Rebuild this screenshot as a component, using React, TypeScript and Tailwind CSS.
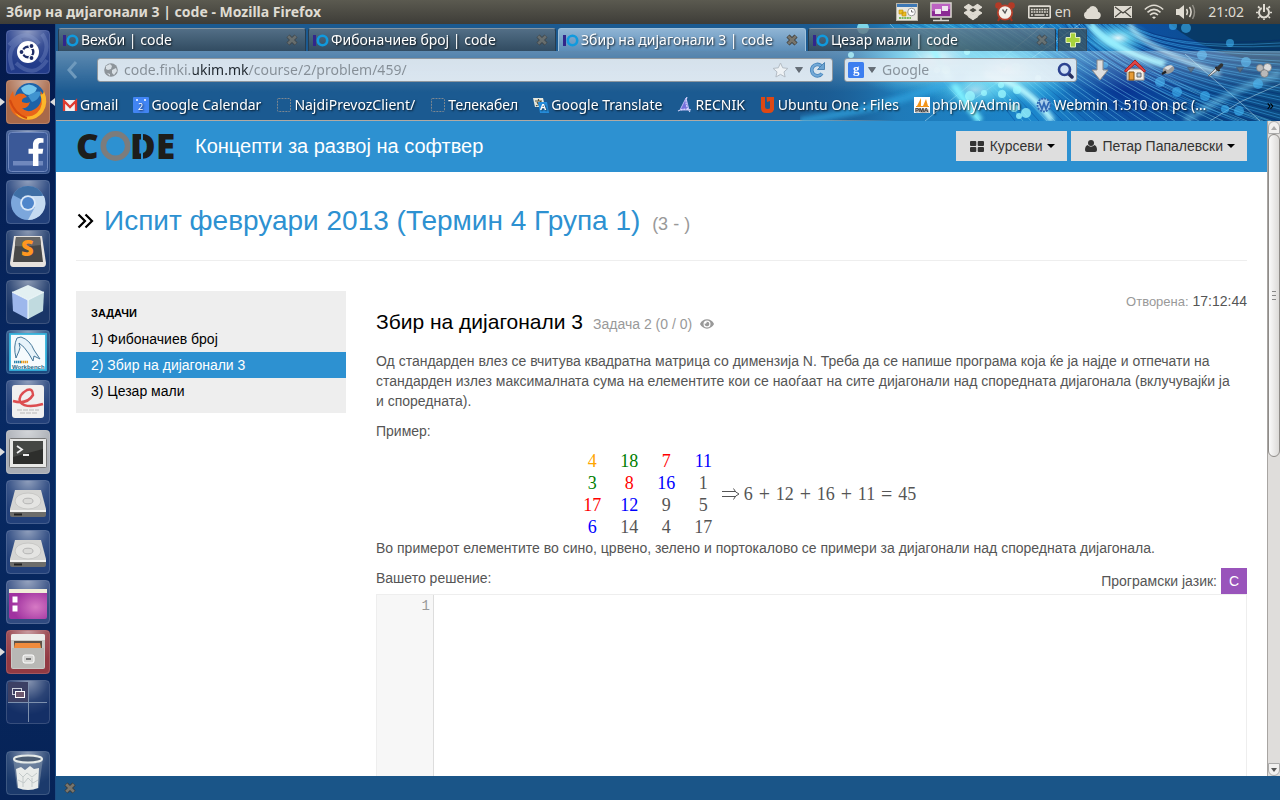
import React from "react";
import { FaDropbox, FaEye, FaFacebookF } from "react-icons/fa";

const ui = "font-['Noto_Sans','Open_Sans',sans-serif]";
const glow = "[text-shadow:1px_1px_2px_#000c]";

/* ---------- system panel ---------- */

function Panel() {
  return (
    <header
      className={`flex h-6 shrink-0 items-center justify-between bg-linear-to-b from-[#5b5a50] to-[#3e3d38] pr-2 pl-1.5 text-sm text-[#dfdbd2] ${ui}`}
    >
      <h1 className="text-sm font-bold">Збир на дијагонали 3 | code - Mozilla Firefox</h1>
      <div className="flex items-center gap-3">
        <svg width="22" height="20" viewBox="0 0 22 20">
          <rect x="0.5" y="1.500" width="21" height="17" fill="#e9e7df" stroke="#b9b5aa" />
          <rect x="1" y="2" width="20" height="3" fill="#3d78b5" />
          <path d="M3 8h4v4H3zM6 10h4v4H6z" fill="#edbd22" stroke="#b88a0a" strokeWidth=".6" />
          <circle cx="15.500" cy="10" r="3.800" fill="#fff" stroke="#999" />
          <path d="M15.500 8v2h2" stroke="#555" fill="none" strokeWidth=".8" />
          <path d="M3 16h12" stroke="#56a838" strokeWidth="1.500" strokeDasharray="2 .6" />
        </svg>
        <svg width="22" height="20" viewBox="0 0 22 20">
          <rect x="1" y="1" width="20" height="14" fill="#8b2a94" stroke="#d8d4ce" strokeWidth="1.600" />
          <path d="M2 2h18v5Q10 10 2 9z" fill="#bd62c2" />
          <rect x="5" y="7" width="6" height="5" fill="#f0e6f0" />
          <rect x="12" y="4" width="6" height="5" fill="#f0e6f0" />
          <path d="M11 16v2M3 18.500h16" stroke="#d8d4ce" strokeWidth="1.500" />
        </svg>
        <span className="flex [&_path]:stroke-[#dfdbd2] [&_path]:[stroke-width:30px]">
          <FaDropbox size={18} />
        </span>
        <svg width="22" height="20" viewBox="0 0 20 20">
          <path d="M5 15l-2 4M15 15l2 4" stroke="#a03020" strokeWidth="2" />
          <circle cx="3.500" cy="3.500" r="3.300" fill="#b33a26" />
          <circle cx="16.500" cy="3.500" r="3.300" fill="#b33a26" />
          <circle cx="10" cy="10.500" r="7.200" fill="#f3efe8" stroke="#b5402c" strokeWidth="1.800" />
          <path d="M7.500 7.500l2.500 3.500 2-4" stroke="#555" strokeWidth="1.300" fill="none" />
        </svg>
        <div className="flex items-center gap-1">
          <svg width="23" height="14" viewBox="0 0 23 14">
            <rect x=".7" y="1.200" width="21.600" height="11.600" rx="1" fill="none" stroke="#dfdbd2" strokeWidth="1.800" />
            <path d="M3 4.500h17M3 7h17" stroke="#dfdbd2" strokeWidth="1.700" strokeDasharray="1.800 .8" />
            <path d="M3 10h2M6.500 10h10M18 10h2" stroke="#dfdbd2" strokeWidth="1.700" />
          </svg>
          <span>en</span>
        </div>
        <svg width="19" height="14" viewBox="0 0 19 14" fill="#dfdbd2">
          <path d="M4 14a4 4 0 0 1-.8-7.500A4 4 0 0 1 6 3.200 4.500 4.500 0 0 1 14 3.500c.8 1 1 2 1 3.200A3.800 3.800 0 0 1 15 14z" />
        </svg>
        <svg width="18" height="12" viewBox="0 0 18 12">
          <rect width="18" height="12" fill="#dfdbd2" />
          <path d="M1 1l8 6 8-6M1 11l6-5M17 11l-6-5" stroke="#48463f" strokeWidth="1.100" fill="none" />
        </svg>
        <svg width="20" height="16" viewBox="0 0 20 16" fill="none" stroke="#dfdbd2" strokeWidth="1.600">
          <path d="M.8 5.500Q10-3 19.200 5.500M3.500 8.300q6.500-6 13 0M6 11q4-3.600 8 0" />
          <path d="M8 13.200q2-1.500 4 0L10 15z" fill="#dfdbd2" stroke="none" />
        </svg>
        <svg width="20" height="16" viewBox="0 0 20 16" fill="none" stroke="#dfdbd2" strokeWidth="1.500">
          <path d="M0 5h3l5-4v14l-5-4H0z" fill="#dfdbd2" stroke="none" />
          <path d="M10.500 5q2 3 0 6M13.500 3q3.200 5 0 10" />
          <path d="M16.500 1q4 7 0 14" opacity=".45" />
        </svg>
        <time>21:02</time>
        <svg width="16" height="16" viewBox="0 0 16 16" fill="none" stroke="#dfdbd2">
          <path d="M5.700 4A5 5 0 1 0 10.300 4" strokeWidth="2" />
          <path d="M8 0v8" strokeWidth="2" />
          <path d="M0 8.500h2M14 8.500h2M2 14l1.600-1.500M14 14l-1.600-1.500M8 14.500V16M2 2.500L3.700 4M14 2.500L12.300 4" strokeWidth="1.700" />
        </svg>
      </div>
    </header>
  );
}

/* ---------- launcher ---------- */

type Tile = { name: string; bg: string; running?: boolean; active?: boolean; art: React.ReactNode };

const disk = (
  <g>
    <path d="M9 10h26l5 19v6H4v-6z" fill="#d5d5d3" />
    <path d="M4 30h36v5q0 2-2 2H6q-2 0-2-2z" fill="#6c6c6a" />
    <path d="M4 30h36v2H4z" fill="#f3f3f1" />
    <ellipse cx="22" cy="21" rx="13" ry="8" fill="#e4e4e2" stroke="#c8c8c6" />
    <ellipse cx="22" cy="21" rx="5" ry="2.800" fill="#dadad8" stroke="#b5b5b5" />
    <path d="M8 34.500h8" stroke="#222" strokeWidth="2" />
  </g>
);

const tiles: Tile[] = [
  {
    name: "Dash",
    bg: "bg-[#233c8a]",
    art: (
      <g fill="none">
        <path d="M3 15Q20-4 33 14M41 30Q28 50 10 33M7 40Q-2 18 16 10M36 4q10 14-2 28" stroke="#8fa3d5" strokeWidth="4" opacity=".3" />
        <circle cx="22" cy="22" r="11" fill="#fff" />
        <circle cx="22" cy="22" r="5.300" stroke="#1d2c66" strokeWidth="2.400" />
        <g fill="#1d2c66" stroke="#fff" strokeWidth="1.200">
          <circle cx="15.500" cy="22" r="2.500" />
          <circle cx="25.500" cy="16" r="2.500" />
          <circle cx="25.500" cy="28" r="2.500" />
        </g>
      </g>
    ),
  },
  {
    name: "Firefox",
    bg: "bg-[#a8694a]",
    running: true,
    active: true,
    art: (
      <g>
        <circle cx="24" cy="18" r="15" fill="#1d62a8" />
        <path d="M15 8q8-7 16 0-2 7-8 7t-8-7z" fill="#75c6ec" />
        <path d="M22 16q8-6 13-4-2 8-9 10z" fill="#3f93cf" />
        <path d="M38 11q5 12-1 21-8 10-20 7Q3 35 3 20q1-5 4-9l1 6q4-5 10-3l3 3q-6 1-5 5 5 2 8 0-2 7-8 6 5 6 13 1 9-6 5-18 4 3 3 6z" fill="#e8641a" />
        <path d="M38 11q5 12-1 21-8 10-20 7-5-2-8-6 13 7 22 0 8-8 3-19 3 2 4-3z" fill="#fbb72b" />
        <path d="M4 20q5 15 17 18" stroke="#d44a10" strokeWidth="2" fill="none" />
      </g>
    ),
  },
  {
    name: "Facebook",
    bg: "bg-[#2b4a86]",
    art: (
      <g>
        <rect x="2.500" y="2.500" width="39" height="39" rx="3" fill="#3b5998" stroke="#6f88be" />
        <rect x="7" y="31" width="30" height="4.500" fill="#7088bd" />
        <FaFacebookF x={16} y={8} size={28} color="#fff" />
      </g>
    ),
  },
  {
    name: "Chromium",
    bg: "bg-[#22407a]",
    art: (
      <g>
        <circle cx="22" cy="23" r="17" fill="#7ca7dc" />
        <path d="M22 23L7 15a17 17 0 0 1 30 0z" fill="#3f6fa5" />
        <path d="M22 16h16a17 17 0 0 1-16 24l7-13z" fill="#c5dbf1" />
        <circle cx="22" cy="23" r="7.800" fill="#dbe9f8" />
        <circle cx="22" cy="23" r="6" fill="#4f86cb" />
      </g>
    ),
  },
  {
    name: "Sublime Text",
    bg: "bg-[#1a3668]",
    art: (
      <g>
        <path d="M8 6h28l4 27q0 4-3 4H7q-3 0-3-4z" fill="#e6e2de" />
        <path d="M10 7h24l3 25H7z" fill="#484848" />
        <path d="M10 7h24l1 8Q20 17 9 16z" fill="#666" />
        <text x="15" y="26" fontSize="22" fontWeight="900" fill="#ff9720" fontFamily="Noto Sans">S</text>
      </g>
    ),
  },
  {
    name: "NetBeans",
    bg: "bg-[#1a3668]",
    art: (
      <g>
        <path d="M22 5l16 7-16 8-16-8z" fill="#e3f0f2" />
        <path d="M6 12l16 8v19L7 31z" fill="#9db7ec" />
        <path d="M38 12l-16 8v19l15-8z" fill="#c0dadf" />
        <path d="M6 12l16 8 16-8M22 20v19" stroke="#f7ffff" fill="none" />
      </g>
    ),
  },
  {
    name: "MySQL Workbench",
    bg: "bg-[#1d4a80]",
    art: (
      <g>
        <rect x="4" y="4" width="36" height="36" fill="#f6fbfd" stroke="#35b3dc" strokeWidth="1.800" />
        <path d="M10 28Q7 16 11 8l4-1q9 3 13 13l6 9-6-3-1 5-4-7q-5-8-10-11 2 5 0 8z" fill="#e7f3fa" stroke="#46789a" />
        <path d="M8 32h7" stroke="#2b85ad" strokeWidth="2.500" strokeDasharray="1.500 .5" />
        <path d="M15 32h7" stroke="#e79a21" strokeWidth="2.500" strokeDasharray="1.500 .5" />
        <text x="6" y="38.500" fontSize="6" fontWeight="700" fill="#296987" fontFamily="Liberation Sans">Workbench</text>
      </g>
    ),
  },
  {
    name: "Document Viewer",
    bg: "bg-[#22407a]",
    art: (
      <g>
        <rect x="6" y="5" width="32" height="33" rx="3" fill="#f0efef" />
        <path d="M7 21q14 4 20-6 0-7-6-5-9 5-7 12 6 7 23 2" fill="none" stroke="#dc4d50" strokeWidth="2.500" />
        <path d="M11 30h22M14 33h17" stroke="#ccc" strokeWidth="1.500" strokeDasharray="5 1" />
      </g>
    ),
  },
  {
    name: "Terminal",
    bg: "bg-[#a9adb4]",
    running: true,
    art: (
      <g>
        <rect x="3.500" y="8.500" width="37" height="29" rx="1" fill="#e8e8e6" stroke="#777" />
        <rect x="7" y="11" width="30" height="23" fill="#2d2e2c" />
        <path d="M7 11h30v8L7 27z" fill="#454744" />
        <path d="M11 16l5 3.500-5 3.500M17 25h6" fill="none" stroke="#eee" strokeWidth="1.800" />
      </g>
    ),
  },
  { name: "Disk 1", bg: "bg-[#22407a]", art: disk },
  { name: "Disk 2", bg: "bg-[#22407a]", art: disk },
  {
    name: "Desktop",
    bg: "bg-[#304a80]",
    art: (
      <g>
        <defs>
          <radialGradient id="purple" cx=".7" cy=".6" r=".6">
            <stop offset="0" stopColor="#d67ac4" />
            <stop offset="1" stopColor="#a032a0" />
          </radialGradient>
        </defs>
        <rect x="3" y="9" width="38" height="30" rx="2" fill="url(#purple)" />
        <path d="M3 9h38v4H3z" fill="#f0edd9" />
        <path d="M6.500 16.500h5v6h-5zM6.500 25.500h5v6h-5z" fill="#fff" />
      </g>
    ),
  },
  {
    name: "Files",
    bg: "bg-[#923a43]",
    running: true,
    art: (
      <g>
        <rect x="5" y="4" width="34" height="35" rx="2" fill="#c9c9c6" />
        <path d="M5 10V6q0-2 2-2h30q2 0 2 2v4z" fill="#ededeb" />
        <rect x="8" y="11" width="28" height="8" fill="#5d5148" />
        <path d="M9 13h25l1 5H8z" fill="#f08b3d" />
        <rect x="6" y="18" width="32" height="20" fill="#b8b8b5" />
        <rect x="17" y="25" width="11" height="8" rx="2" fill="#d4d4d2" stroke="#fff" />
        <rect x="20" y="28" width="5" height="2" fill="#777" />
      </g>
    ),
  },
  {
    name: "Workspaces",
    bg: "bg-[#142f66]",
    art: (
      <g>
        <path d="M2 2h20v20H2z" fill="#3c4064" />
        <path d="M22.500 3v39M2 22.500h39" stroke="#7d90ae" />
        <rect x="6.500" y="8.500" width="9" height="6" fill="none" stroke="#cbd0db" />
        <rect x="9.500" y="11.500" width="9" height="6" fill="#6e596e" stroke="#fff" />
      </g>
    ),
  },
  {
    name: "Trash",
    bg: "bg-[#1b3a6c]",
    art: (
      <g>
        <path d="M7 7h30l-4 30q-11 4-22 0z" fill="#8193a8" opacity=".6" />
        <ellipse cx="22" cy="8" rx="14" ry="3.500" fill="#4b5c72" stroke="#e6ebe9" strokeWidth="2" />
        <path d="M10 18l5-2 4 3 5-4 4 3 5-1-1 20q-10 4-20 0z" fill="#e9ecea" />
        <path d="M13 22l4 4 4-4 5 4 5-4M12 29l6 3 4-5 5 5 5-3M17 26v10M26 27v9" stroke="#c3caca" fill="none" />
      </g>
    ),
  },
];

function Launcher() {
  return (
    <nav
      aria-label="Launcher"
      className="flex w-14 shrink-0 flex-col gap-1.5 border-r border-[#1c4d83] bg-linear-to-b from-[#04194b] via-[#082a64] to-[#062357] pt-1.5 pb-[5px]"
    >
      {tiles.map((t) => (
        <div key={t.name} className="flex items-center last:mt-auto">
          <svg width="6" height="10" viewBox="0 0 6 10">
            {t.running && <path d="M0 1l5 4-5 4z" fill="#dcdcdc" />}
          </svg>
          <button aria-label={t.name} className={`size-11 rounded-[4px] ${t.bg}`}>
            <svg width="44" height="44" viewBox="0 0 44 44">
              <defs>
                <radialGradient id="tileShade" cx=".5" cy="0" r=".8">
                  <stop offset="0" stopColor="#fff" stopOpacity=".5" />
                  <stop offset=".6" stopColor="#fff" stopOpacity=".1" />
                  <stop offset="1" stopColor="#fff" stopOpacity="0" />
                </radialGradient>
              </defs>
              <rect x=".5" y=".5" width="43" height="43" rx="4" fill="url(#tileShade)" stroke="#fff" strokeOpacity=".15" />
              {t.art}
            </svg>
          </button>
          <svg width="5" height="10" viewBox="0 0 5 10">
            {t.active && <path d="M5 1L0 5l5 4z" fill="#dcdcdc" />}
          </svg>
        </div>
      ))}
    </nav>
  );
}

/* ---------- browser chrome ---------- */

const dots = [
  [63, 4, 6], [51, 31, 3], [167, 28, 3], [146, 46, 4], [373, 2, 4], [386, 4, 5], [430, 19, 4], [402, 31, 5],
  [446, 38, 5], [305, 41, 3], [360, 58, 5], [377, 68, 5], [405, 72, 5], [458, 60, 5], [425, 85, 4], [439, 87, 5],
  [201, 61, 3], [217, 66, 4], [202, 70, 4], [184, 69, 3], [170, 72, 5], [214, 84, 4], [226, 89, 5], [219, 92, 3],
  [216, 43, 4], [203, 42, 3], [137, 46, 3], [238, 54, 3],
];

function ThemeArt() {
  const strands = Array.from({ length: 34 }, (_, i) => i);
  return (
    <svg className="absolute inset-y-0 right-0" width="480" height="97" viewBox="0 0 480 97" aria-hidden="true">
      <defs>
        <linearGradient id="sea" x1="0" x2="1" y1="0" y2="0">
          <stop offset="0" stopColor="#1b5a91" stopOpacity="0" />
          <stop offset=".2" stopColor="#1f7ab8" />
          <stop offset=".5" stopColor="#1b86cc" />
          <stop offset=".7" stopColor="#0d50a2" />
          <stop offset="1" stopColor="#0c4a80" />
        </linearGradient>
        <radialGradient id="flare">
          <stop offset="0" stopColor="#f0ffff" stopOpacity=".95" />
          <stop offset=".35" stopColor="#74e2f8" stopOpacity=".75" />
          <stop offset="1" stopColor="#2fb4e6" stopOpacity="0" />
        </radialGradient>
        <radialGradient id="deep">
          <stop offset="0" stopColor="#062f90" />
          <stop offset="1" stopColor="#0a479c" stopOpacity="0" />
        </radialGradient>
        <filter id="soft">
          <feGaussianBlur stdDeviation="2" />
        </filter>
      </defs>
      <rect width="480" height="97" fill="url(#sea)" />
      <ellipse cx="325" cy="65" rx="70" ry="40" fill="url(#deep)" />
      <path d="M370 0h110v40Q410 34 370 0z" fill="#07365c" opacity=".8" />
      <g fill="none" strokeWidth="1">
        {strands.map((i) => (
          <path
            key={`a${i}`}
            d={`M${100 + i * 6} 0Q${160 + i * 6} ${24 + i} ${215 + i * 8} 97`}
            stroke={i % 3 ? "#7bdcf8" : "#073f91"}
            opacity=".4"
          />
        ))}
        {strands.map((i) => (
          <path
            key={`b${i}`}
            d={`M${265 + i * 2} 0Q${305 + i * 2} ${58 - i} 480 ${115 - i * 3}`}
            stroke={i % 3 ? "#3ea4e6" : "#06296f"}
            opacity=".5"
          />
        ))}
        <path d="M125 97L245 0M160 85L280 0M90 0l90 97M385 30l55 48 40-18M440 78l-30 19M440 78l20 19" stroke="#d0f6ff" opacity=".45" />
      </g>
      <ellipse cx="140" cy="34" rx="95" ry="42" fill="url(#flare)" />
      <ellipse cx="205" cy="46" rx="75" ry="40" fill="url(#flare)" />
      <ellipse cx="175" cy="66" rx="50" ry="26" fill="url(#flare)" opacity=".6" />
      <ellipse cx="318" cy="14" rx="34" ry="18" fill="url(#flare)" />
      <g fill="none" filter="url(#soft)">
        <path d="M130 20Q150 60 180 97" stroke="#7ff1ff" strokeWidth="7" />
        <path d="M185 50Q230 62 252 97" stroke="#bdf9ff" strokeWidth="6" />
        <path d="M0 97Q90 84 165 52" stroke="#2fa4e0" strokeWidth="8" opacity=".7" />
        <path d="M290 0Q310 26 365 40" stroke="#9df2ff" strokeWidth="7" />
        <path d="M330 0Q335 20 420 50" stroke="#d8fdff" strokeWidth="4" opacity=".8" />
        <path d="M385 97Q430 66 480 50" stroke="#72c8ee" strokeWidth="7" opacity=".5" />
      </g>
      {dots.map(([x, y, r]) => (
        <circle
          key={`${x}-${y}`}
          cx={x}
          cy={y}
          r={r}
          fill={x > 300 ? "#3fb4f4" : "#9ffaff"}
          opacity={x > 300 ? ".6" : ".75"}
        />
      ))}
    </svg>
  );
}

function Favicon() {
  return (
    <svg width="17" height="14" viewBox="0 0 17 14" className="shrink-0">
      <path d="M1 2h3v11H1z" fill="#32268a" />
      <circle cx="10.500" cy="7.500" r="4.700" fill="none" stroke="#109ade" strokeWidth="2.600" />
    </svg>
  );
}

function Cross() {
  return (
    <svg width="12" height="12" viewBox="0 0 12 12">
      <path d="M2 2l8 8M10 2l-8 8" stroke="#3a3936" strokeWidth="4.400" />
      <path d="M2.200 2.200l7.600 7.600M9.800 2.200L2.200 9.800" stroke="#77756d" strokeWidth="2.800" />
    </svg>
  );
}

const tabs = [
  { title: "Вежби | code" },
  { title: "Фибоначиев број | code" },
  { title: "Збир на дијагонали 3 | code", active: true },
  { title: "Цезар мали | code" },
];

function TabStrip() {
  return (
    <div className="flex h-[27px] items-end gap-0.5 pl-0.5">
      {tabs.map((t) => (
        <div
          key={t.title}
          className={`flex h-[23px] w-[248px] min-w-0 items-center gap-px rounded-t-[3px] border border-b-0 pr-[7px] pl-[3px] ${
            t.active
              ? "border-[#9fc0da] bg-linear-to-b from-[#8fb4d4] to-[#5c8db7]"
              : "border-[#273d50] border-t-[#8795a1] bg-linear-to-b from-[#667683]/75 to-[#3a4852]/75"
          }`}
        >
          <Favicon />
          <a href="#" className={`flex-1 truncate pl-px text-sm text-white ${glow}`}>{t.title}</a>
          <button aria-label="Close tab" className={t.active ? "" : "opacity-70"}>
            <Cross />
          </button>
        </div>
      ))}
      <button
        aria-label="New tab"
        className="flex h-[23px] w-[29px] items-center justify-center rounded-t-[3px] border border-b-0 border-[#34485a] border-t-[#8795a1] bg-[#3b4f5a]/75"
      >
        <svg width="16" height="16" viewBox="0 0 16 16">
          <path d="M5.500 1h5v4.500H15v5h-4.500V15h-5v-4.500H1v-5h4.500z" fill="#a8d33c" stroke="#e4f2b8" />
        </svg>
      </button>
    </div>
  );
}

function Down() {
  return (
    <svg width="8" height="6" viewBox="0 0 8 6" className="shrink-0">
      <path d="M.5.500h7L4 5.500z" fill="#666e76" stroke="#444c55" strokeWidth=".6" />
    </svg>
  );
}

function NavBar() {
  const field =
    "flex h-6 items-center rounded-[3px] border border-[#8f979e] bg-linear-to-b from-[#e4ecf3]/90 to-[#eef4f9]/90";
  return (
    <div className="flex h-[38px] items-center px-2 pl-2.5">
      <button aria-label="Back" className="mr-[19px]">
        <svg width="12" height="20" viewBox="0 0 12 20">
          <path d="M10 2L3 10l7 8" fill="none" stroke="#6f9abd" strokeWidth="3" />
        </svg>
      </button>
      <div className={`${field} min-w-0 flex-1 gap-1.5 px-1.5`}>
        <svg width="14" height="14" viewBox="0 0 14 14" className="shrink-0">
          <circle cx="7" cy="7" r="6.800" fill="#8d949a" />
          <path d="M2 3l4-2 2 2-1 3-3 1-2-1zM8 7l4-2 1 3-3 4-2-2zM3 10l3 1v2z" fill="#d8dfe5" />
        </svg>
        <input
          aria-label="Address"
          defaultValue="code.finki.ukim.mk/course/2/problem/459/"
          className="min-w-0 flex-1 bg-[linear-gradient(90deg,#858e96_69px,#20282f_69px,#20282f_125px,#858e96_125px)] bg-clip-text text-sm text-transparent outline-none"
        />
        <svg width="17" height="16" viewBox="0 0 17 16" className="shrink-0">
          <path
            d="M8.500 1l2.200 4.800 5.200.6-3.900 3.500 1.100 5.100-4.600-2.600L3.900 15 5 9.900 1.100 6.400l5.200-.6z"
            fill="#eef2f5"
            stroke="#b4bcc4"
          />
        </svg>
        <Down />
        <button aria-label="Reload">
          <svg width="17" height="16" viewBox="0 0 17 16">
            <path d="M13 11.500A5.700 5.700 0 1 1 12 3.700" fill="none" stroke="#4584bb" strokeWidth="3.600" />
            <path d="M13 11.500A5.700 5.700 0 1 1 12 3.700" fill="none" stroke="#74a9d6" strokeWidth="2" />
            <path d="M15.500.500v7h-7z" fill="#6ba3d2" stroke="#3a75aa" strokeWidth=".8" />
          </svg>
        </button>
      </div>
      <div className={`${field} ml-[11px] w-[233px] gap-1.5 pr-0.5 pl-[3px]`}>
        <div className="flex items-center gap-1">
          <svg width="16" height="16" viewBox="0 0 16 16">
            <rect width="16" height="16" rx="1.500" fill="#3c7ef0" />
            <text x="5" y="11" fontSize="13" fontWeight="700" fontFamily="Liberation Serif" fill="#fff">g</text>
          </svg>
          <Down />
        </div>
        <input
          aria-label="Search"
          placeholder="Google"
          className="min-w-0 flex-1 text-sm outline-none placeholder:text-[#8a949d]"
        />
        <svg width="17" height="17" viewBox="0 0 17 17" className="shrink-0">
          <path d="M11 11l4 4" stroke="#25305f" strokeWidth="3.500" strokeLinecap="round" />
          <circle cx="7.500" cy="7.500" r="5.500" fill="#cfe0f5" stroke="#2d4390" strokeWidth="2.600" />
        </svg>
      </div>
      <div className="ml-3.5 flex items-center gap-3.5">
        <svg width="18" height="22" viewBox="0 0 18 22">
          <path d="M6 1h6v10h5l-8 10L1 11h5z" fill="#dedede" stroke="#888" />
        </svg>
        <svg width="24" height="24" viewBox="0 0 24 24">
          <path d="M4 11h17v11H4z" fill="#f4efe8" stroke="#a79c8e" />
          <path d="M12 2L2 12q-1 2 1 2l9-8 9 8q2 0 1-2z" fill="#e04545" stroke="#a72525" />
          <path d="M6 14h5v8H6z" fill="#e79b35" stroke="#875410" />
          <path d="M14 15h4v4h-4z" fill="#b5cbe0" stroke="#666" />
        </svg>
        <svg width="14" height="12" viewBox="0 0 14 12">
          <ellipse cx="7.500" cy="5.500" rx="6" ry="4" fill="#9b9b9b" transform="rotate(-20 7.500 5.500)" />
          <path d="M3 4q5-4 9-2L7 6z" fill="#dedede" />
          <path d="M1 10l4-2.500" stroke="#222" strokeWidth="2.500" />
        </svg>
      </div>
      <div className="ml-3 flex items-center gap-3">
        <span className="opacity-70"><Down /></span>
        <svg width="17" height="14" viewBox="0 0 17 14">
          <path d="M1 13l8-8 2 2-8 6z" fill="#d6dbe0" stroke="#555" strokeWidth=".7" />
          <path d="M8.500 4l4 4" stroke="#222" strokeWidth="2" />
          <path d="M10.500 6l4-4" stroke="#333" strokeWidth="3.500" strokeLinecap="round" />
        </svg>
        <span className="opacity-70"><Down /></span>
        <svg width="16" height="15" viewBox="0 0 16 15" fill="#b9b9b9" stroke="#777" strokeWidth=".7">
          <circle cx="4" cy="5" r="3.500" />
          <circle cx="11.500" cy="4.500" r="4" fill="#dcdcdc" />
          <circle cx="8.500" cy="10.500" r="3.800" />
        </svg>
      </div>
    </div>
  );
}

const dotted = (
  <rect x="1.500" y="1.500" width="13" height="13" rx="1" fill="none" stroke="#7d8790" strokeDasharray="2 1" />
);

const bookmarks: { label: string; icon: React.ReactNode }[] = [
  {
    label: "Gmail",
    icon: (
      <g>
        <rect x="1" y="3" width="14" height="11" fill="#f2f2f2" />
        <path d="M2 14V4l6 6 6-6v10" fill="none" stroke="#df3b30" strokeWidth="2.300" />
      </g>
    ),
  },
  {
    label: "Google Calendar",
    icon: (
      <g>
        <rect width="16" height="16" rx="1" fill="#4285f4" />
        <path d="M3 2h2v2H3zM11 2h2v2h-2z" fill="#cfe0fd" />
        <text x="5" y="13" fontSize="9" fill="#fff" fontFamily="Noto Sans">2</text>
      </g>
    ),
  },
  { label: "NajdiPrevozClient/", icon: dotted },
  { label: "Телекабел", icon: dotted },
  {
    label: "Google Translate",
    icon: (
      <g>
        <path d="M0 1h10l2 9H2z" fill="#e8e8dc" />
        <path d="M2 4h7M5.500 2v2M3 9q4-2 5-5M4 5q1 3 4 4" stroke="#545440" strokeWidth="1.200" fill="none" />
        <path d="M5 5h9l2 11H7z" fill="#268edd" />
        <text x="7" y="13" fontSize="9" fontWeight="700" fill="#fff" fontFamily="Noto Sans">A</text>
      </g>
    ),
  },
  {
    label: "RECNIK",
    icon: (
      <g>
        <path d="M9 1L3 13h9z" fill="#7470dc" stroke="#b9b8f4" />
        <path d="M10 0q-3 7 3 15M1 14q6-3 13-1" fill="none" stroke="#d9d8ff" strokeWidth="1.200" strokeDasharray="2 .8" />
      </g>
    ),
  },
  {
    label: "Ubuntu One : Files",
    icon: (
      <g>
        <path d="M1 0h4v10q0 2 2.500 2T10 11h4q0 5-5 5H6q-5 0-5-5z" fill="#dd4814" />
        <path d="M6.500 0H14v13h-4V4L7 5z" fill="#dd4814" />
      </g>
    ),
  },
  {
    label: "phpMyAdmin",
    icon: (
      <g>
        <rect width="16" height="16" fill="#fff" />
        <path d="M7 1v8H3zM12 2l2 7H9z" fill="#f39316" />
        <path d="M2 9.500h13" stroke="#f39316" />
        <text x="1" y="15" fontSize="6" fontWeight="700" fill="#333" fontFamily="Liberation Sans">PMA</text>
      </g>
    ),
  },
  {
    label: "Webmin 1.510 on pc (…",
    icon: (
      <g fill="none" stroke="#2f68b4" strokeWidth="1.800">
        <circle cx="8" cy="8" r="6.500" fill="#a9cfec" strokeDasharray="2 1" />
        <path d="M3 5l3 7 2-6 2 6 3-7" />
      </g>
    ),
  },
];

function Bookmarks() {
  return (
    <div className="flex h-[31px] items-center justify-between px-1.5">
      <ul className="flex items-center gap-[15px]">
        {bookmarks.map((b) => (
          <li key={b.label}>
            <a href="#" className={`flex items-center gap-0.5 text-sm whitespace-nowrap text-white ${glow}`}>
              <svg width="16" height="16" viewBox="0 0 16 16" className="shrink-0">{b.icon}</svg>
              {b.label}
            </a>
          </li>
        ))}
      </ul>
      <button aria-label="More bookmarks" className="text-sm leading-4 text-black">»</button>
    </div>
  );
}

/* ---------- page ---------- */

function Logo() {
  return (
    <svg width="100" height="50" viewBox="0 0 100 50" role="img" aria-label="CODE">
      <g fontFamily="Open Sans" fontWeight="800" fontSize="35" fill="#1d1d1b">
        <text x="0" y="38">C</text>
        <text x="54" y="38">D</text>
        <text x="80" y="38">E</text>
      </g>
      <path d="M66 9v32" stroke="#2d91d1" strokeWidth="2" />
      <circle cx="39.500" cy="25" r="12.200" fill="none" stroke="#7c7c7c" strokeWidth="5.600" />
    </svg>
  );
}

function Caret() {
  return (
    <svg width="8" height="4" viewBox="0 0 8 4">
      <path d="M0 0h8L4 4z" fill="#000" />
    </svg>
  );
}

function SiteBar() {
  const btn = "flex h-[30px] items-center gap-1 bg-[#dedede] pr-3 pl-3.5 text-sm text-[#333]";
  return (
    <div className="flex h-[51px] shrink-0 items-center bg-[#2d91d1] px-5 pb-px">
      <a href="#" className="flex items-center gap-[19px] text-xl text-white">
        <Logo />
        <span>Концепти за развој на софтвер</span>
      </a>
      <div className="ml-auto flex gap-1">
        <button className={btn}>
          <svg width="14" height="11" viewBox="0 0 14 11" fill="#333">
            <rect width="6.300" height="5" rx="1" />
            <rect x="7.700" width="6.300" height="5" rx="1" />
            <rect y="6" width="6.300" height="5" rx="1" />
            <rect x="7.700" y="6" width="6.300" height="5" rx="1" />
          </svg>
          <span className="pl-0.5">Курсеви</span>
          <Caret />
        </button>
        <button className={btn}>
          <svg width="12" height="12" viewBox="0 0 12 12" fill="#333">
            <circle cx="6" cy="3" r="3" />
            <path d="M2.500 5Q6 8.500 9.500 5 12 6 12 10q0 2-2 2H2q-2 0-2-2 0-4 2.500-5z" />
          </svg>
          <span className="pl-0.5">Петар Папалевски</span>
          <Caret />
        </button>
      </div>
    </div>
  );
}

const problems = ["1) Фибоначиев број", "2) Збир на дијагонали 3", "3) Цезар мали"];

function Sidebar() {
  return (
    <nav className="w-[270px] shrink-0 self-start bg-[#eee] py-[9px] text-sm leading-[26px] text-black">
      <h3 className="px-[15px] text-[11px] leading-[26px] font-bold">ЗАДАЧИ</h3>
      <ul>
        {problems.map((p, i) => (
          <li key={p}>
            <a href="#" className={`block px-[15px] ${i === 1 ? "bg-[#2d91d1] text-white" : ""}`}>{p}</a>
          </li>
        ))}
      </ul>
    </nav>
  );
}

const o = "text-[#ffa500]";
const g = "text-[#008000]";
const r = "text-[#ff0000]";
const b = "text-[#0000ff]";
const matrix: [number, string][][] = [
  [[4, o], [18, g], [7, r], [11, b]],
  [[3, g], [8, r], [16, b], [1, ""]],
  [[17, r], [12, b], [9, ""], [5, ""]],
  [[6, b], [14, ""], [4, ""], [17, ""]],
];

function Formula() {
  return (
    <div className="flex items-center justify-center pr-[133px] font-['Liberation_Serif',serif] text-lg leading-[22px]">
      <table>
        <tbody>
          {matrix.map((row, i) => (
            <tr key={i}>
              {row.map(([n, c], j) => (
                <td key={j} className={`w-[37px] p-0 text-center ${c}`}>{n}</td>
              ))}
            </tr>
          ))}
        </tbody>
      </table>
      <div className="flex items-center gap-1">
        <svg width="18" height="12" viewBox="1 0 18 12" fill="none" stroke="#555" role="img" aria-label="implies">
          <path d="M1 3.500h14M1 8.500h14M12.500.500q1.500 4 5.500 5.500-4 1.500-5.500 5.500" />
        </svg>
        {"6 + 12 + 16 + 11 = 45".split(" ").map((s, i) => (
          <span key={i} className={i % 2 ? "w-[15px] text-center text-xl leading-[22px]" : ""}>{s}</span>
        ))}
      </div>
    </div>
  );
}

function Problem() {
  return (
    <section className="min-w-0 flex-1">
      <p className="text-right">
        <span className="text-[13px] leading-none text-[#999]">Отворена:</span> 17:12:44
      </p>
      <h2 className="mb-[18px] flex items-center text-[21px] leading-[22px] text-black">
        Збир на дијагонали 3
        <small className="mt-1 ml-2.5 flex items-center gap-2 text-sm leading-4 text-[#999]">
          Задача 2 (0 / 0) <FaEye size={14} />
        </small>
      </h2>
      <p className="mb-2.5 pr-2">
        Од стандарден влез се вчитува квадратна матрица со димензија N. Треба да се напише програма која ќе ја најде и
        отпечати на стандарден излез максималната сума на елементите кои се наоѓаат на сите дијагонали над споредната
        дијагонала (вклучувајќи ја и споредната).
      </p>
      <p className="mb-[9px]">Пример:</p>
      <Formula />
      <p className="mb-2.5">
        Во примерот елементите во сино, црвено, зелено и портокалово се примери за дијагонали над споредната дијагонала.
      </p>
      <div className="flex items-start justify-between">
        <label htmlFor="solution">Вашето решение:</label>
        <div className="flex items-center gap-1 leading-[26px]">
          Програмски јазик:
          <span className="w-[26px] bg-[#9954bb] text-center text-white">C</span>
        </div>
      </div>
      <div className="flex h-[300px] border border-[#eee] font-['Liberation_Mono',monospace]">
        <div className="w-[57px] border-r border-[#ddd] bg-[#f7f7f7] pt-px pr-[3px] text-right text-[#999]">1</div>
        <textarea id="solution" className="flex-1 resize-none p-1 outline-none" />
      </div>
    </section>
  );
}

function Scrollbar() {
  return (
    <div aria-hidden="true" className="flex w-[13px] shrink-0 flex-col border-l border-[#a8a5a2] bg-[#dfdddb]">
      <div className="flex h-[13px] items-center justify-center rounded-t-full border border-[#aaa] bg-[#f1f0ef]">
        <svg width="6" height="4" viewBox="0 0 6 4"><path d="M0 4l3-4 3 4z" fill="#aaa" /></svg>
      </div>
      <div className="flex h-[323px] flex-col items-center justify-center gap-[3px] rounded-full border border-[#8f8c89] bg-linear-to-r from-[#fafafa] to-[#dcdad8]">
        <i className="h-px w-1 bg-[#888]" />
        <i className="h-px w-1 bg-[#888]" />
        <i className="h-px w-1 bg-[#888]" />
      </div>
      <div className="mt-auto flex h-[13px] items-center justify-center rounded-b-full border border-[#aaa] bg-[#f1f0ef]">
        <svg width="6" height="4" viewBox="0 0 6 4"><path d="M0 0l3 4 3-4z" fill="#555" /></svg>
      </div>
    </div>
  );
}

export default function App() {
  return (
    <div className="flex h-screen flex-col overflow-hidden">
      <Panel />
      <div className="flex min-h-0 flex-1">
        <Launcher />
        <div className="flex min-w-0 flex-1 flex-col">
          <div className={`relative shrink-0 border-b border-[#b2aaa2] bg-[#1b5a91] ${ui}`}>
            <ThemeArt />
            <div className="relative">
              <TabStrip />
              <div className="bg-linear-to-b from-white/30 to-transparent to-60%">
                <NavBar />
                <Bookmarks />
              </div>
            </div>
          </div>
          <div className="flex min-h-0 flex-1 bg-white">
            <main className="min-w-0 flex-1 overflow-hidden font-['Liberation_Sans',sans-serif] text-sm leading-5 text-[#555]">
              <SiteBar />
              <div className="px-5">
                <div className="flex items-center border-b border-[#eee] pt-[29px] pb-[19px] text-[28px] leading-10 text-[#2d91d1]">
                  <svg width="20" height="16" viewBox="0 0 20 16" className="mr-2">
                    <path d="M2.500 1.500L9 8l-6.500 6.500M9.500 1.500L16 8l-6.500 6.500" fill="none" stroke="#000" strokeWidth="2.200" />
                  </svg>
                  <h2>
                    Испит февруари 2013 (Термин 4 Група 1){" "}
                    <small className="ml-1 text-lg leading-none text-[#999]">(3 - )</small>
                  </h2>
                </div>
                <div className="mt-[30px] flex gap-[30px]">
                  <Sidebar />
                  <Problem />
                </div>
              </div>
            </main>
            <Scrollbar />
          </div>
          <footer className="flex h-6 shrink-0 items-center bg-[#1a5588] pl-2">
            <button aria-label="Close bar"><Cross /></button>
          </footer>
        </div>
      </div>
    </div>
  );
}
